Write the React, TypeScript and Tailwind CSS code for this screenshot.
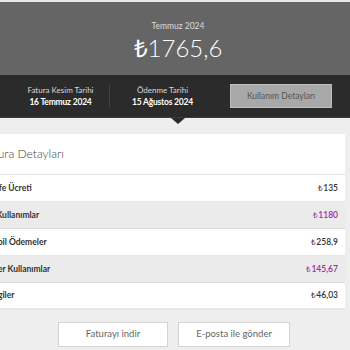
import React from 'react';

type Row = {
  label: string;
  amount: string;
  shaded?: boolean;
  accent?: boolean;
};

const ROWS: Row[] = [
  { label: 'Tarife Ücreti', amount: '135' },
  { label: 'Ek Kullanımlar', amount: '1180', shaded: true, accent: true },
  { label: 'Mobil Ödemeler', amount: '258,9' },
  { label: 'Diğer Kullanımlar', amount: '145,67', shaded: true, accent: true },
  { label: 'Vergiler', amount: '46,03' },
];

export default function App() {
  return (
    <div className="w-[350px] h-[350px] overflow-hidden bg-[#eeeeee] font-['Lato',sans-serif]">
      <div className="h-[2px] bg-[#e6e6e6]" />

      {/* hero */}
      <div className="h-[73px] bg-[#656565] flex flex-col items-center pl-[6px] pt-[19px]">
        <div className="text-[8.5px] leading-[11px] text-[#dcdcdc]">Temmuz 2024</div>
        <div className="mt-[1px] text-[24px] leading-[30px] font-light text-white">
          <span className="font-['Open_Sans',sans-serif]">₺</span>1765,6
        </div>
      </div>

      {/* dates bar */}
      <div className="h-[43px] bg-[#2b2b2b] border-b border-[#3c3c3c] flex items-center">
        <div className="w-[109px] flex flex-col items-center pl-[12px]">
          <div className="text-[8px] leading-[11px] text-[#d8d8d8]">Fatura Kesim Tarihi</div>
          <div className="text-[8.5px] leading-[12px] font-bold text-white tracking-[-0.2px]">16 Temmuz 2024</div>
        </div>
        <div className="w-px h-[24px] bg-[#444]" />
        <div className="w-[105px] flex flex-col items-center">
          <div className="text-[8px] leading-[11px] text-[#d8d8d8]">Ödenme Tarihi</div>
          <div className="text-[8.5px] leading-[12px] font-bold text-white tracking-[-0.2px]">15 Ağustos 2024</div>
        </div>
        <button className="ml-[15px] w-[102px] h-[24px] bg-[#a8a8a8] border border-[#bdbdbd] text-[8.5px] text-[#555]">
          Kullanım Detayları
        </button>
      </div>

      {/* pointer */}
      <div className="flex justify-center pl-[6px]">
        <div className="w-0 h-0 border-l-[7px] border-r-[7px] border-t-[6px] border-l-transparent border-r-transparent border-t-[#2b2b2b]" />
      </div>

      {/* card */}
      <div className="mt-[10px] ml-[-30px] w-[375px] bg-white">
        <div className="h-[41px] flex items-center pl-[12px] border-b border-[#e4e4e4]">
          <span className="text-[12px] font-light text-[#444]">Fatura Detayları</span>
        </div>
        {ROWS.map((row, i) => (
          <div
            key={i}
            className={`h-[27px] flex items-center justify-between pl-[15px] pr-[7px] border-b ${
              row.shaded ? 'bg-[#ebebeb] border-[#dedede]' : 'bg-white border-[#e6e6e6]'
            } ${i === ROWS.length - 1 ? 'border-b-2 border-[#d6d6d6]' : ''}`}
          >
            <span className="text-[8.5px] font-bold text-[#333]">{row.label}</span>
            <span
              className={`text-[8.5px] font-semibold ${row.accent ? 'text-[#9c2aa0]' : 'text-[#333]'}`}
            >
              <span className="font-['Open_Sans',sans-serif] text-[8px] font-normal">₺</span>
              {row.amount}
            </span>
          </div>
        ))}
      </div>

      {/* actions */}
      <div className="mt-[12px] flex pl-[58px] gap-[10px]">
        <button className="w-[110px] h-[25px] bg-white border border-[#d4d4d4] text-[9.5px] text-[#666]">
          Faturayı indir
        </button>
        <button className="w-[112px] h-[25px] bg-white border border-[#d4d4d4] text-[9.5px] text-[#666]">
          E-posta ile gönder
        </button>
      </div>
    </div>
  );
}
